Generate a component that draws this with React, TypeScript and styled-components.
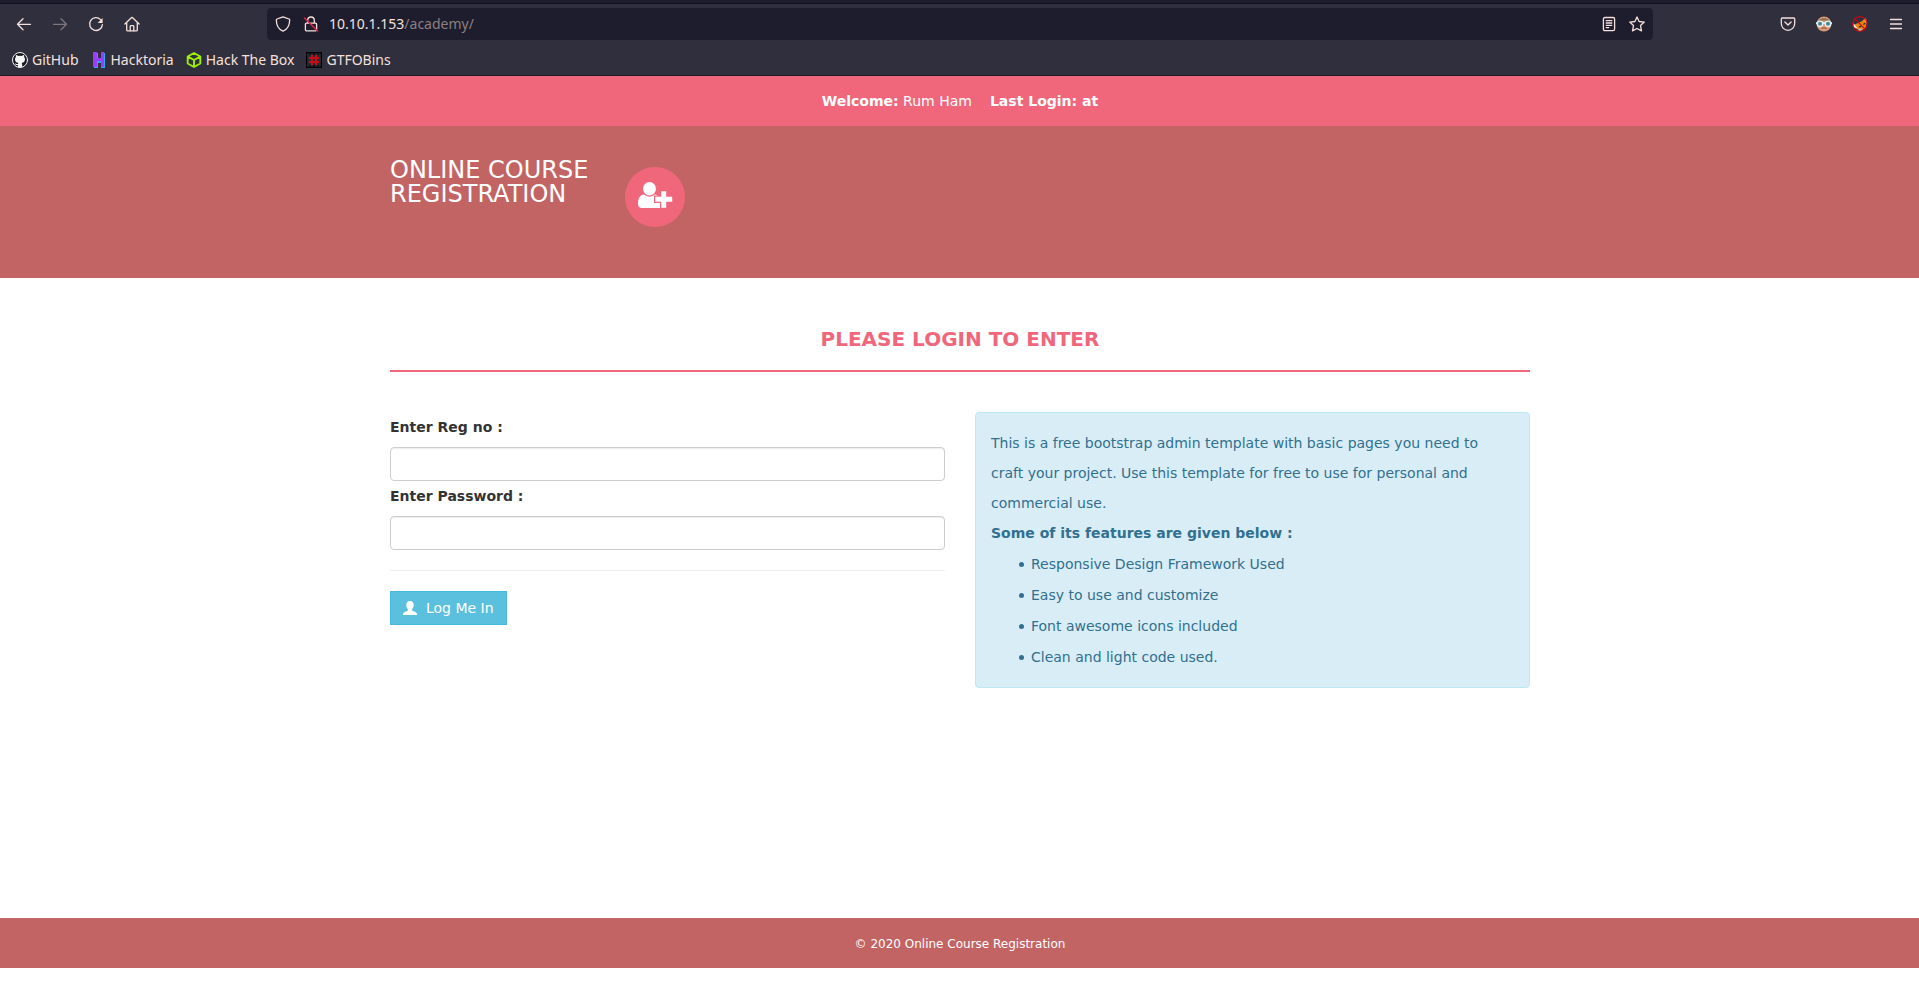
import React from "react";
import styled, { createGlobalStyle } from "styled-components";

const GlobalStyle = createGlobalStyle`
  *, *::before, *::after { box-sizing: border-box; }
  body {
    margin: 0;
    background: #fff;
    color: #333;
    font: 14px/20px "DejaVu Sans", sans-serif;
  }
`;

const Page = styled.div`
  display: flex;
  flex-direction: column;
  min-height: 100vh;
  padding-bottom: 22px;
`;

/* Browser chrome */

const Chrome = styled.div`
  background: #302f3d;
  border-bottom: 1px solid #1b1a26;
  color: #f5e0dc;
  font: 14px/20px "Noto Sans", sans-serif;
`;

const TabEdge = styled.div`
  height: 4px;
  background: #1e1d2d;
  border-bottom: 1px solid #12111b;
`;

const Toolbar = styled.div`
  display: flex;
  align-items: center;
  height: 40px;
  padding: 0 5px 0 6px;
`;

const ToolButton = styled.button<{ $dim?: boolean }>`
  display: flex;
  align-items: center;
  justify-content: center;
  width: 36px;
  height: 32px;
  padding: 0;
  border: 0;
  background: none;
  color: inherit;
  opacity: ${(p) => (p.$dim ? 0.4 : 1)};
`;

const AddressBar = styled.div`
  display: flex;
  align-items: center;
  flex: 1;
  height: 32px;
  margin: 0 117px;
  padding: 0 2px;
  border-radius: 4px;
  background: #1e1d2d;
`;

const AddressButton = styled(ToolButton)`
  width: 28px;
`;

const Address = styled.div`
  flex: 1;
  padding: 0 4px;
  outline: 0;
  white-space: nowrap;
`;

const AddressPath = styled.span`
  color: #8a8084;
`;

const Bookmarks = styled.nav`
  display: flex;
  align-items: center;
  gap: 12px;
  height: 31px;
  padding: 0 12px;
`;

const Bookmark = styled.a`
  display: flex;
  align-items: center;
  gap: 4px;
  color: inherit;
  text-decoration: none;
`;

/* Site */

const Container = styled.div`
  width: 100%;
  max-width: 1169px;
  margin: 0 auto;
  padding: 0 14px 0 15px;
`;

const WelcomeBar = styled.header`
  display: flex;
  justify-content: center;
  gap: 18px;
  padding: 15px 15px 15px 16px;
  background: #f0677c;
  color: #fff;
`;

const Banner = styled.div`
  min-height: 152px;
  padding-top: 32px;
  background: #c26464;
`;

const BannerRow = styled(Container)`
  display: flex;
  gap: 35px;
`;

const Brand = styled.a`
  width: 200px;
  color: #fff;
  font-size: 24px;
  line-height: 24px;
  text-decoration: none;
  text-transform: uppercase;
`;

const Badge = styled.span`
  width: 60px;
  height: 60px;
  margin-top: 9px;
  border-radius: 50%;
  background: #f0677c;
`;

const Main = styled.main`
  flex: 1;
  padding: 50px 0;
`;

const Heading = styled.h1`
  margin: 0 0 40px;
  padding-bottom: 20px;
  border-bottom: 2px solid #f0677c;
  color: #f0677c;
  font-size: 20px;
  line-height: 22px;
  text-align: center;
  text-transform: uppercase;
`;

const Columns = styled.div`
  display: grid;
  grid-template-columns: repeat(2, minmax(0, 1fr));
  align-items: start;
  gap: 30px;
`;

const Form = styled.form`
  display: flex;
  flex-direction: column;
  align-items: flex-start;
`;

const Label = styled.label`
  margin: 5px 0 10px;
  font-weight: 700;
`;

const Input = styled.input`
  width: 100%;
  height: 34px;
  padding: 6px 12px;
  border: 1px solid #ccc;
  border-radius: 4px;
  background: #fff;
  box-shadow: inset 0 1px 1px rgba(0, 0, 0, 0.075);
  color: #555;
  font: inherit;
`;

const Divider = styled.hr`
  width: 100%;
  margin: 20px 0;
  border: 0;
  border-top: 1px solid #eee;
`;

const LoginButton = styled.button`
  display: flex;
  align-items: center;
  gap: 9px;
  padding: 6px 12px;
  border: 1px solid #46b8da;
  background: #5bc0de;
  color: #fff;
  font: inherit;
`;

const Info = styled.section`
  padding: 15px;
  border: 1px solid #bce8f1;
  border-radius: 4px;
  background: #d9edf7;
  color: #31708f;
  line-height: 30px;
`;

const InfoText = styled.p`
  margin: 0;
`;

const Features = styled.ul`
  margin: 0;
  padding-left: 28px;
  list-style: none;
`;

const Feature = styled.li`
  display: flex;
  align-items: center;
  gap: 7px;
  padding-top: 1px;

  &::before {
    content: "";
    width: 5px;
    height: 5px;
    border-radius: 50%;
    background: currentColor;
  }
`;

const Footer = styled.footer`
  padding: 16px 15px 14px 16px;
  background: #c26464;
  color: #fff;
  font-size: 12px;
  text-align: center;
`;

const Svg = ({ size = 16, children }: { size?: number; children: React.ReactNode }) => (
  <svg
    width={size}
    height={size}
    viewBox={`0 0 ${size} ${size}`}
    fill="none"
    stroke="currentColor"
    strokeWidth="1.3"
    strokeLinecap="round"
    strokeLinejoin="round"
    aria-hidden="true"
  >
    {children}
  </svg>
);

const BackIcon = () => (
  <Svg><path d="M14.5 8.3H1.5M7 2.8 1.5 8.3 7 13.8" /></Svg>
);
const ForwardIcon = () => (
  <Svg><path d="M1.5 8.3h13M9 2.8l5.5 5.5L9 13.8" /></Svg>
);
const ReloadIcon = () => (
  <Svg>
    <path d="M12.6 3.6A6.4 6.4 0 1 0 14.4 8.6" />
    <path d="M14.6 2v4.9H9.7z" fill="currentColor" stroke="none" />
  </Svg>
);
const HomeIcon = () => (
  <Svg>
    <path d="M.9 8 7.6 1.5a.6.6 0 0 1 .8 0L15.1 8M2.7 6.8v7.1c0 .6.5 1 1 1h8.6c.6 0 1-.4 1-1V6.8" />
    <path d="M6.2 14.8v-4.4c0-.5.3-.8.8-.8h2c.5 0 .8.3.8.8v4.4" />
  </Svg>
);
const ShieldIcon = () => (
  <Svg><path d="M8 .8 14 3c.5.2.7.5.7 1-.1 5.2-2.1 9.3-6.7 11.2C3.4 13.3 1.4 9.2 1.3 4c0-.5.2-.8.7-1z" /></Svg>
);
const LockIcon = () => (
  <Svg>
    <path d="M4.7 7V4.3a3.3 3.3 0 0 1 6.6 0V7M3.4 7.2h9.2c.6 0 1 .4 1 1v5.6c0 .6-.4 1-1 1H3.4c-.6 0-1-.4-1-1V8.2c0-.6.4-1 1-1z" />
    <path d="M1.5 2 14.6 15" stroke="#e2224d" strokeWidth="1.5" />
  </Svg>
);
const ReaderIcon = () => (
  <Svg><path d="M4 1.5h8c1 0 1.6.6 1.6 1.6v10c0 1-.6 1.6-1.6 1.6H4c-1 0-1.6-.6-1.6-1.6v-10c0-1 .6-1.6 1.6-1.6zM5.2 4.7h5.6M5.2 7h5.6M5.2 9.3h5.6M5.2 11.6h2.6" /></Svg>
);
const StarIcon = () => (
  <Svg><path d="m8 .9 2.1 4.6 5.2.6-3.8 3.5 1 5.3L8 12.5l-4.5 2.4 1-5.3L.7 6.1l5.2-.6z" /></Svg>
);
const PocketIcon = () => (
  <Svg><path d="M2.3 2h11.4c.6 0 1 .4 1 1v4.6a6.7 6.7 0 0 1-13.4 0V3c0-.6.4-1 1-1zM4.9 6 8 9l3.1-3" /></Svg>
);
const GogglesIcon = () => (
  <Svg>
    <g stroke="none">
      <circle cx="8" cy="8" r="7.5" fill="#d99a78" />
      <path d="M.8 8A7.3 7.3 0 0 1 15.2 8C13 4.6 10 4.3 8 4.5 5 4.3 3 5 .8 8z" fill="#8c7355" />
      <path d="M5.8 12.4c1.5-.7 2.9-.7 4.4 0" stroke="#a85c48" />
    </g>
    <path d="M.2 7.2h15.6" stroke="#dff0f0" strokeWidth="1.8" />
    <circle cx="4" cy="7.8" r="2.7" fill="#4d8795" stroke="#dff0f0" />
    <circle cx="12" cy="7.8" r="2.7" fill="#4d8795" stroke="#dff0f0" />
  </Svg>
);
const FoxIcon = () => (
  <Svg>
    <path d="M1.5 9 9.5 5.5 13.8 1.6l.8 5.2-1.3 5.6-5 2.2L3 12z" fill="#e88410" stroke="none" />
    <path d="m1.2 7 .4 4.2 4.2 1.2zM12.6 3l2 .8.2 4z" fill="#f6eee8" stroke="none" />
    <path d="m5 14 3.5-1.6 2.4 1.3L8 15.3z" fill="#c6bcbd" stroke="none" />
    <path d="m7.4 10.8 1.5-.5M11.8 8.2l1-.8" stroke="#402418" />
    <circle cx="8" cy="8" r="7.3" stroke="#c10914" strokeWidth="1.2" />
    <path d="m2.9 2.9 10.2 10.2" stroke="#c10914" strokeWidth="1.2" />
  </Svg>
);
const MenuIcon = () => (
  <Svg><path d="M2.5 3.5h11M2.5 8h11M2.5 12.5h11" /></Svg>
);

const GitHubIcon = () => (
  <Svg>
    <circle cx="8" cy="8" r="7.5" fill="#17191e" stroke="#f4f4f4" strokeWidth="1" />
    <path
      d="M5.9 15.2v-2.3c-2.1.4-2.5-.8-3.2-1.5 1.3-.2 1.7 1.1 3.2.6.1-.5.3-.8.5-1C4.4 10.7 3 9.7 3 7.3c0-.9.3-1.6.9-2.2-.2-.8-.1-1.4.1-2.1.8 0 1.5.4 2.2.9a8 8 0 0 1 3.6 0c.7-.5 1.4-.9 2.2-.9.2.7.3 1.3.1 2.1.6.6.9 1.3.9 2.2 0 2.4-1.4 3.4-3.4 3.7.4.4.6.9.6 1.6v2.6z"
      fill="#f4f4f4"
      stroke="none"
    />
  </Svg>
);
const HacktoriaIcon = () => (
  <Svg>
    <g stroke="none">
      <path d="M3 1h4v5h3V1h4v15h-4v-5H7v5H3z" fill="#35a4f0" />
      <path d="M2 0h4v6h4V0h3v15h-3V9H6v6H2z" fill="#9a3dfb" />
    </g>
  </Svg>
);
const HackTheBoxIcon = () => (
  <Svg><path d="m8 1 6.3 3.5v7L8 15l-6.3-3.5v-7zM1.9 4.6 8 8l6.1-3.4M8 8v6.7" stroke="#9fef00" strokeWidth="1.9" /></Svg>
);
const GtfoBinsIcon = () => (
  <Svg>
    <path d="M.5.5h15v15H.5z" fill="#292a35" stroke="#000" />
    <path d="M4 0v3M8 0v3M12 0v3M4 13v3M8 13v3M12 13v3" stroke="#000" strokeWidth="1" />
    <path d="M6 3v10M10 3v10M3 6h10M3 10h10" stroke="#c40d14" strokeWidth="2" strokeLinecap="butt" />
  </Svg>
);

const UserPlusIcon = () => (
  <svg width="60" height="60" viewBox="0 0 60 60" fill="#fff" aria-hidden="true">
    <path d="M19.3 27.6c3.2 2.7 7.2 2.7 10.4 0 2.8.2 4.6 2 5.6 5.2V41H17c-2.5 0-4-1.5-4-4 0-5 1.7-9.4 6.3-9.4z" />
    <ellipse cx="24.5" cy="21.7" rx="6.5" ry="6.7" />
    <path
      d="M36.2 24.2h5v5.6h6v5h-6v6h-5v-6h-6v-5h6z"
      stroke="#f0677c"
      strokeWidth="2.4"
      paintOrder="stroke"
    />
  </svg>
);
const UserIcon = () => (
  <svg width="14" height="14" viewBox="0 0 14 14" fill="#fff" aria-hidden="true">
    <path d="M7 0c2.3 0 3.7 1.5 3.7 3.8 0 1.9-.5 3.3-1.6 4.4v1.2c1 .7 2.6 1.1 3.7 1.9.9.6 1.2 1.4 1.2 2.7H0c0-1.3.3-2.1 1.2-2.7 1.1-.8 2.7-1.2 3.7-1.9V8.2C3.8 7.1 3.3 5.7 3.3 3.8 3.3 1.5 4.7 0 7 0z" />
  </svg>
);

const bookmarks = [
  { name: "GitHub", Icon: GitHubIcon },
  { name: "Hacktoria", Icon: HacktoriaIcon },
  { name: "Hack The Box", Icon: HackTheBoxIcon },
  { name: "GTFOBins", Icon: GtfoBinsIcon },
];

const features = [
  "Responsive Design Framework Used",
  "Easy to use and customize",
  "Font awesome icons included",
  "Clean and light code used.",
];

export default function App() {
  return (
    <Page>
      <GlobalStyle />
      <Chrome>
        <TabEdge />
        <Toolbar>
          <ToolButton aria-label="Back"><BackIcon /></ToolButton>
          <ToolButton aria-label="Forward" $dim disabled><ForwardIcon /></ToolButton>
          <ToolButton aria-label="Reload"><ReloadIcon /></ToolButton>
          <ToolButton aria-label="Home"><HomeIcon /></ToolButton>
          <AddressBar>
            <AddressButton aria-label="Tracking protection"><ShieldIcon /></AddressButton>
            <AddressButton aria-label="Connection not secure"><LockIcon /></AddressButton>
            <Address role="textbox" aria-label="Address" contentEditable suppressContentEditableWarning spellCheck={false}>
              10.10.1.153<AddressPath>/academy/</AddressPath>
            </Address>
            <AddressButton aria-label="Reader view"><ReaderIcon /></AddressButton>
            <AddressButton aria-label="Bookmark this page"><StarIcon /></AddressButton>
          </AddressBar>
          <ToolButton aria-label="Save to Pocket"><PocketIcon /></ToolButton>
          <ToolButton aria-label="User agent"><GogglesIcon /></ToolButton>
          <ToolButton aria-label="Proxy"><FoxIcon /></ToolButton>
          <ToolButton aria-label="Menu"><MenuIcon /></ToolButton>
        </Toolbar>
        <Bookmarks>
          {bookmarks.map(({ name, Icon }) => (
            <Bookmark key={name} href="#"><Icon />{name}</Bookmark>
          ))}
        </Bookmarks>
      </Chrome>

      <WelcomeBar>
        <span><strong>Welcome:</strong> Rum Ham</span>
        <strong>Last Login: at</strong>
      </WelcomeBar>
      <Banner>
        <BannerRow>
          <Brand href="#">Online Course Registration</Brand>
          <Badge><UserPlusIcon /></Badge>
        </BannerRow>
      </Banner>

      <Main>
        <Container>
          <Heading>Please Login To Enter</Heading>
          <Columns>
            <Form onSubmit={(e) => e.preventDefault()}>
              <Label htmlFor="regno">Enter Reg no :</Label>
              <Input id="regno" type="text" />
              <Label htmlFor="password">Enter Password :</Label>
              <Input id="password" type="password" />
              <Divider />
              <LoginButton type="submit"><UserIcon />Log Me In</LoginButton>
            </Form>
            <Info>
              <InfoText>
                This is a free bootstrap admin template with basic pages you need to craft your
                project. Use this template for free to use for personal and commercial use.
              </InfoText>
              <InfoText><strong>Some of its features are given below :</strong></InfoText>
              <Features>
                {features.map((f) => <Feature key={f}>{f}</Feature>)}
              </Features>
            </Info>
          </Columns>
        </Container>
      </Main>

      <Footer>© 2020 Online Course Registration</Footer>
    </Page>
  );
}
